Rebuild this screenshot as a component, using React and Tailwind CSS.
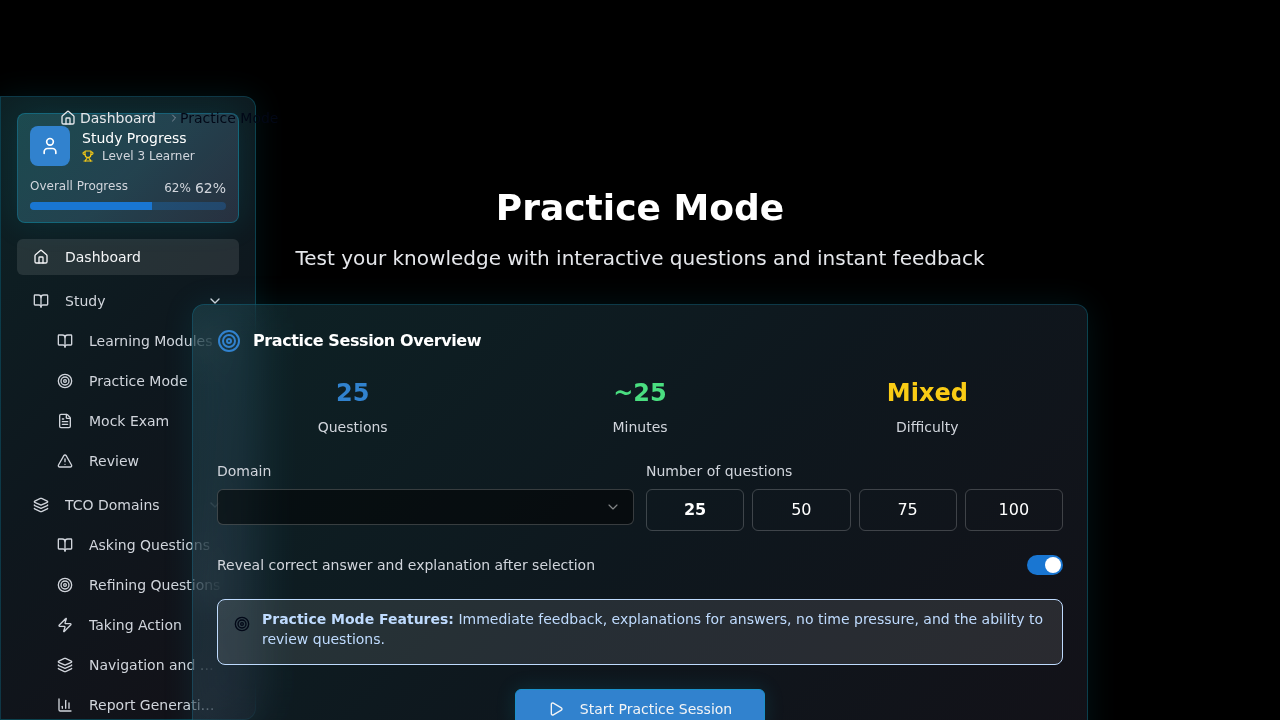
import React from 'react';
import {
  House, BookOpen, Target, FileText, TriangleAlert, Layers, Zap, ChartColumn,
  ChevronDown, ChevronRight, User, Trophy, Play,
} from 'lucide-react';

const glass =
  'border border-[#0891b2]/30 bg-[linear-gradient(135deg,rgba(42,105,116,0.32)_0%,rgba(52,86,110,0.27)_50%,rgba(82,72,100,0.23)_100%)] backdrop-blur-[20px] backdrop-brightness-125';
const glow = 'shadow-[0_0_32px_rgba(6,182,212,0.1)]';

function Item({ icon: Icon, label, child, active, expandable }) {
  return (
    <div
      className={`flex h-9 shrink-0 items-center gap-4 rounded-md px-4 text-sm ${child ? 'ml-6' : ''} ${active ? 'bg-white/10 text-gray-100' : 'text-gray-300'}`}
    >
      <Icon className="size-4 shrink-0" />
      <span className="flex-1 truncate">{label}</span>
      {expandable && <ChevronDown className="size-4 shrink-0" />}
    </div>
  );
}

function Group({ icon, label, items }) {
  return (
    <div className="flex flex-col gap-1">
      <Item icon={icon} label={label} expandable />
      {items.map(([itemIcon, text]) => (
        <Item key={text} icon={itemIcon} label={text} child />
      ))}
    </div>
  );
}

function Sidebar() {
  return (
    <aside className={`absolute top-24 left-0 flex h-[624px] w-64 flex-col gap-4 overflow-hidden rounded-r-xl p-4 ${glass} ${glow}`}>
      <section className="h-[110px] shrink-0 rounded-lg border border-[#0891b2]/45 bg-[linear-gradient(135deg,rgba(46,124,132,0.45)_0%,rgba(62,114,136,0.45)_50%,rgba(78,84,112,0.4)_100%)] p-3 shadow-[0_0_32px_rgba(6,182,212,0.13)]">
        <div className="flex items-center gap-3">
          <div className="flex size-10 items-center justify-center rounded-lg bg-[#3182ce] text-white">
            <User className="size-5" />
          </div>
          <div>
            <div className="text-sm leading-5 text-white">Study Progress</div>
            <div className="flex items-center gap-2 text-xs leading-4 text-gray-300">
              <Trophy strokeWidth={2.3} className="size-3 text-[#facc15]" />
              Level 3 Learner
            </div>
          </div>
        </div>
        <div className="mt-3 flex h-5 items-start justify-between text-xs leading-4 text-gray-300">
          <span>Overall Progress</span>
          <span className="flex items-center gap-1"><span>62%</span><span className="text-sm leading-5">62%</span></span>
        </div>
        <div className="mt-1 h-2 overflow-hidden rounded-full bg-[#1976d2]/30">
          <div className="h-full w-[62%] bg-[#1976d2]" />
        </div>
      </section>
      <nav className="flex flex-col gap-2">
        <Item icon={House} label="Dashboard" active />
        <Group
          icon={BookOpen}
          label="Study"
          items={[[BookOpen, 'Learning Modules'], [Target, 'Practice Mode'], [FileText, 'Mock Exam'], [TriangleAlert, 'Review']]}
        />
        <Group
          icon={Layers}
          label="TCO Domains"
          items={[
            [BookOpen, 'Asking Questions'], [Target, 'Refining Questions'], [Zap, 'Taking Action'],
            [Layers, 'Navigation and Basic Modules'], [ChartColumn, 'Report Generation and Export'],
          ]}
        />
      </nav>
    </aside>
  );
}

function Stat({ value, label, color }) {
  return (
    <div className="text-center">
      <div className={`text-2xl font-bold ${color}`}>{value}</div>
      <div className="mt-2 text-sm text-gray-300">{label}</div>
    </div>
  );
}

export default function App() {
  return (
    <div className="relative h-[720px] overflow-hidden bg-black font-['DejaVu_Sans',sans-serif] text-white">
      <Sidebar />
      <nav className="absolute top-[108px] left-[60px] flex h-5 items-center text-sm">
        <House className="size-4 text-gray-200" />
        <span className="ml-1 text-gray-200">Dashboard</span>
        <ChevronRight className="ml-3 size-3 text-gray-400/80" />
        <span className="text-[#020817]">Practice Mode</span>
      </nav>
      <main className="relative mx-auto w-[896px] pt-[188px]">
        <header className="text-center">
          <h1 className="text-4xl leading-10 font-bold">Practice Mode</h1>
          <p className="mt-4 text-xl leading-7 text-gray-200">Test your knowledge with interactive questions and instant feedback</p>
        </header>
        <section className={`mt-8 h-[500px] rounded-xl p-6 ${glass} ${glow}`}>
          <div className="flex h-6 items-center gap-3">
            <Target className="size-6 text-[#3182ce]" />
            <h2 className="font-semibold tracking-tight">Practice Session Overview</h2>
          </div>
          <div className="mt-6 grid grid-cols-3 gap-4">
            <Stat value="25" label="Questions" color="text-[#3182ce]" />
            <Stat value="~25" label="Minutes" color="text-[#4ade80]" />
            <Stat value="Mixed" label="Difficulty" color="text-[#facc15]" />
          </div>
          <div className="mt-6 grid grid-cols-2 gap-3 text-sm">
            <div>
              <div className="text-gray-300">Domain</div>
              <div className="mt-2 flex h-9 items-center justify-end rounded-md border border-white/20 bg-black/50 px-3">
                <ChevronDown strokeWidth={1.75} className="size-4 text-white/50" />
              </div>
            </div>
            <div>
              <div className="text-gray-300">Number of questions</div>
              <div className="mt-2 grid grid-cols-4 gap-2 text-base">
                {[25, 50, 75, 100].map((n) => (
                  <div key={n} className={`flex h-[42px] items-center justify-center rounded-md border border-white/20 ${n === 25 ? 'font-bold' : ''}`}>{n}</div>
                ))}
              </div>
            </div>
          </div>
          <div className="mt-6 flex h-5 items-center justify-between text-sm text-gray-300">
            <span>Reveal correct answer and explanation after selection</span>
            <div className="flex h-5 w-9 items-center justify-end rounded-full bg-[#1976d2] px-0.5">
              <div className="size-4 rounded-full bg-white" />
            </div>
          </div>
          <div className="mt-6 flex h-[66px] gap-3 rounded-lg border border-[#bfdbfe] bg-white/10 px-4 py-[9px] text-sm leading-5 text-[#bfdbfe]">
            <Target className="mt-[7px] size-4 shrink-0 text-[#020817]" />
            <p><strong className="font-bold">Practice Mode Features:</strong> Immediate feedback, explanations for answers, no time pressure, and the ability to review questions.</p>
          </div>
          <div className="mt-6 flex justify-center">
            <button className="flex h-10 w-[250px] items-center justify-center gap-4 rounded-md border border-[#1a91cb] bg-[#3182ce] text-sm text-gray-100 shadow-[0_0_20px_rgba(6,182,212,0.15)]">
              <Play className="size-4" />
              Start Practice Session
            </button>
          </div>
        </section>
      </main>
    </div>
  );
}
